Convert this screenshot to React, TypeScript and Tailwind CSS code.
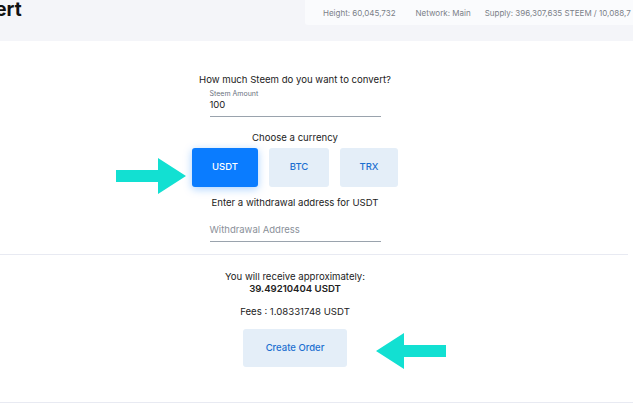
import { ReactNode } from 'react'

function Arrow({ flip = false }: { flip?: boolean }) {
  // thick cyan pointer used to call out the controls
  return (
    <svg
      width="76"
      height="40"
      viewBox="0 0 76 40"
      className={flip ? '-scale-x-100' : ''}
    >
      <path d="M2 14 L44 14 L44 2 L72 20 L44 38 L44 26 L2 26 Z" fill="#12e0d2" />
    </svg>
  )
}

function CurrencyButton({ active, width, children }: { active?: boolean; width: string; children: ReactNode }) {
  return (
    <button
      className={
        active
          ? `${width} h-[39px] rounded-[3px] bg-[#0a7cff] text-white text-[9.5px] font-medium shadow-[0_2px_8px_rgba(10,124,255,0.35)]`
          : `${width} h-[39px] rounded-[3px] bg-[#e4eef8] text-[#1b6fd0] text-[9.5px] font-medium`
      }
    >
      {children}
    </button>
  )
}

export default function App() {
  return (
    <div className="w-[633px] h-[412px] overflow-hidden bg-white font-['Inter',sans-serif] text-[#222]">
      <header className="h-[41px] bg-[#f4f5f9] flex items-start justify-between overflow-hidden">
        <h1 className="-ml-[53px] text-[19px] font-bold leading-[20px] text-[#111]">Convert</h1>
        <div className="ml-auto w-[328px] h-[25px] bg-[#fafbfd] rounded-bl-[3px] flex items-center pl-[18px] whitespace-nowrap overflow-hidden text-[8px] text-[#7a7f88]">
          <span>Height: 60,045,732</span>
          <span className="ml-[20px]">Network: Main</span>
          <span className="ml-[14px]">Supply: 396,307,635 STEEM / 10,088,7</span>
        </div>
      </header>

      <section className="relative ml-[192px] w-[206px] flex flex-col items-center pt-[33px]">
        <p className="text-[9.6px] leading-[12px]">How much Steem do you want to convert?</p>
        <div className="w-[171px] mt-[3px] border-b border-[#9aa3ad] pb-[5px]">
          <div className="text-[7px] leading-[9px] text-[#6b7280]">Steem Amount</div>
          <div className="text-[9.5px] leading-[12px] text-[#222] mt-[1px]">100</div>
        </div>
        <p className="mt-[15px] text-[9.6px] leading-[12px]">Choose a currency</p>
        <div className="mt-[4px] w-full flex gap-[11px]">
          <CurrencyButton active width="w-[66px]">USDT</CurrencyButton>
          <CurrencyButton width="w-[60px]">BTC</CurrencyButton>
          <CurrencyButton width="w-[58px]">TRX</CurrencyButton>
        </div>
        <p className="mt-[10px] text-[9.6px] leading-[12px]">Enter a withdrawal address for USDT</p>
        <div className="w-[171px] mt-[15px] border-b border-[#9aa3ad] pb-[5px] text-[9.5px] leading-[12px] text-[#8a9099]">
          Withdrawal Address
        </div>
        <div className="absolute left-[-78px] top-[115px]">
          <Arrow />
        </div>
      </section>

      <div className="mt-[12px] mr-[5px] border-t border-[#e8eaf2]" />

      <section className="relative ml-[192px] w-[206px] flex flex-col items-center pt-[16px]">
        <p className="text-[9.6px] leading-[12px]">You will receive approximately:</p>
        <p className="text-[9.6px] leading-[12px] font-semibold">39.49210404 USDT</p>
        <p className="mt-[11px] text-[9.6px] leading-[12px]">Fees : 1.08331748 USDT</p>
        <button className="mt-[11px] w-[104px] h-[38px] rounded-[3px] bg-[#e4eef8] text-[#1b6fd0] text-[9.5px] font-medium">
          Create Order
        </button>
        <div className="absolute left-[180px] top-[76px]">
          <Arrow flip />
        </div>
      </section>

      <div className="mt-[35px] border-t border-[#e8eaf2]" />
    </div>
  )
}
